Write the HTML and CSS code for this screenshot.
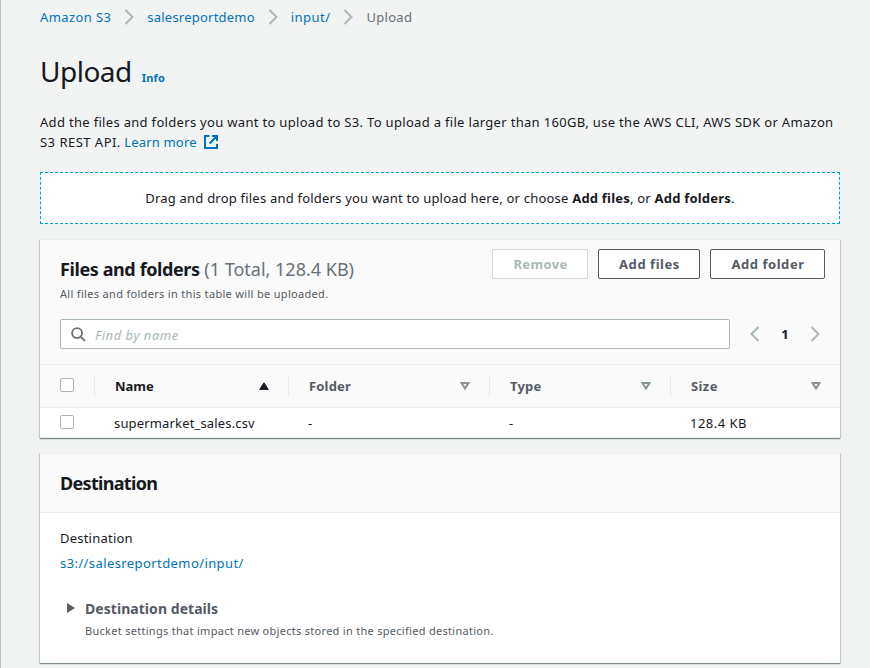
FILE: index.html
```html
<!DOCTYPE html>
<html lang="en">
<head>
<meta charset="utf-8">
<title>Upload</title>
<link rel="stylesheet" href="styles.css">
</head>
<body>
<main class="page">
  <nav class="crumbs">
    <a class="c1">Amazon S3</a>
    <svg class="chev" viewBox="0 0 10 16"><path d="M1.500 1l7 7-7 7"/></svg>
    <a class="c2">salesreportdemo</a>
    <svg class="chev" viewBox="0 0 10 16"><path d="M1.500 1l7 7-7 7"/></svg>
    <a class="c3">input/</a>
    <svg class="chev" viewBox="0 0 10 16"><path d="M1.500 1l7 7-7 7"/></svg>
    <span class="c4">Upload</span>
  </nav>
  <header class="title"><h1>Upload</h1><a class="info">Info</a></header>
  <p class="intro"><span class="l1">Add the files and folders you want to upload to S3. To upload a file larger than 160GB, use the AWS CLI, AWS SDK or Amazon</span><br><span class="l2">S3 REST API.</span> <a class="learn">Learn more</a><svg class="ext" viewBox="0 0 14 14"><path d="M5.500 1H1v12h12V9M8 1h5v5M13 1L5.500 8.500"/></svg></p>
  <div class="drop"><span class="dt">Drag and drop files and folders you want to upload here, or choose <b>Add files</b>, or <b>Add folders</b>.</span></div>

  <section class="card files">
    <div class="head">
      <div class="heading">
        <h2><span class="ff">Files and folders</span> <span class="count">(1 Total, 128.4 KB)</span></h2>
        <p class="desc">All files and folders in this table will be uploaded.</p>
      </div>
      <div class="actions">
        <button class="off b1">Remove</button>
        <button class="b2">Add files</button>
        <button class="b3">Add folder</button>
      </div>
    </div>
    <div class="tools">
      <div class="search">
        <svg viewBox="0 0 16 16"><circle cx="6.500" cy="6.500" r="5.300"/><path d="M10.500 10.500l4.500 4.300"/></svg>
        <span class="ph">Find by name</span>
      </div>
      <div class="pager">
        <svg class="chev" viewBox="0 0 10 16"><path d="M8.500 1l-7 7 7 7"/></svg>
        <b>1</b>
        <svg class="chev" viewBox="0 0 10 16"><path d="M1.500 1l7 7-7 7"/></svg>
      </div>
    </div>
    <div class="row th">
      <div class="cell"><i class="box"></i></div>
      <div class="cell dark"><span>Name</span><svg class="tri" viewBox="0 0 10 8"><path d="M5 .8L9.300 7.400H.7z"/></svg></div>
      <div class="cell"><span class="folder">Folder</span><svg class="tri open" viewBox="0 0 10 8"><path d="M1.500 1h7L5 6.500z"/></svg></div>
      <div class="cell"><span class="folder">Type</span><svg class="tri open" viewBox="0 0 10 8"><path d="M1.500 1h7L5 6.500z"/></svg></div>
      <div class="cell"><span class="size">Size</span><svg class="tri open" viewBox="0 0 10 8"><path d="M1.500 1h7L5 6.500z"/></svg></div>
    </div>
    <div class="row td">
      <div class="cell"><i class="box"></i></div>
      <div class="cell"><span class="csv">supermarket_sales.csv</span></div>
      <div class="cell">-</div>
      <div class="cell">-</div>
      <div class="cell"><span class="kb">128.4 KB</span></div>
    </div>
  </section>

  <section class="card dest">
    <div class="bar"><h2 class="dh">Destination</h2></div>
    <div class="body">
      <div class="label">Destination</div>
      <a class="uri">s3://salesreportdemo/input/</a>
      <div class="expand">
        <svg viewBox="0 0 8 10"><path d="M0 0l8 5-8 5z"/></svg>
        <div><h3>Destination details</h3><p class="bucket">Bucket settings that impact new objects stored in the specified destination.</p></div>
      </div>
    </div>
  </section>
</main>
</body>
</html>
```
FILE: styles.css
```css
* { box-sizing: border-box; }
body { margin: 0; height: 668px; overflow: hidden; background: #f2f3f3; border-left: 1px solid #b9c2c2; font: 13px/20px "Noto Sans", "Open Sans", sans-serif; color: #16191f; }
h1, h2, h3, p { margin: 0; font-weight: normal; white-space: nowrap; }
a { color: #0073bb; }
svg { display: block; flex: none; fill: none; }
.page { width: 800px; margin-left: 39px; }

.crumbs { display: flex; align-items: center; height: 34px; gap: 13px; }
.chev { width: 10px; height: 16px; stroke: #aab7b8; stroke-width: 2; }
.c1 { letter-spacing: .4px; }
.c2 { letter-spacing: .22px; }
.c3 { letter-spacing: .45px; }
.c4 { letter-spacing: .3px; color: #687078; }

.title { display: flex; align-items: baseline; gap: 10px; margin-top: 19px; height: 59px; }
h1 { font-size: 28px; line-height: 36px; letter-spacing: -.5px; }
.info { font-size: 11px; font-weight: 700; letter-spacing: .15px; }
.intro { height: 60px; }
.l1 { letter-spacing: .315px; }
.l2 { letter-spacing: .48px; }
.learn { letter-spacing: .18px; }
.ext { display: inline-block; width: 14px; height: 14px; margin-left: 7px; vertical-align: -2px; stroke: #0073bb; stroke-width: 2; }
.drop { height: 52px; background: #fff; border: 1px dashed #00a1c9; display: flex; align-items: center; justify-content: center; white-space: nowrap; letter-spacing: .212px; }

.card { margin-top: 15px; background: #fff; box-shadow: 0 1px 1px 0 rgba(0,28,36,.3), 1px 1px 1px 0 rgba(0,28,36,.15), -1px 1px 1px 0 rgba(0,28,36,.15); border-top: 1px solid #eaeded; }
.files { height: 199px; }
.head { display: flex; justify-content: space-between; height: 79px; padding: 9px 15px 0 20px; background: #fafafa; }
.heading { padding-top: 9px; }
h2 { font-size: 18px; line-height: 22px; }
.ff, .dh, h3, b { font-weight: 700; }
.ff { letter-spacing: -.4px; }
.count { color: #687078; }
.desc, .bucket { font-size: 11px; line-height: 18px; color: #545b64; }
.desc { margin-top: 5px; letter-spacing: .317px; }
.actions { display: flex; gap: 10px; }
button { height: 30px; padding: 0 0 0 1px; border: 1px solid #545b64; border-radius: 2px; background: #fff; color: #545b64; font: 700 13px/20px "Noto Sans", sans-serif; letter-spacing: .55px; }
.b1 { width: 96px; letter-spacing: .33px; }
.b2 { width: 102px; }
.b3 { width: 115px; }
.off { border-color: #d5dbdb; color: #aab7b8; }

.tools { display: flex; height: 45px; padding-left: 20px; background: #fafafa; }
.search { display: flex; align-items: center; width: 670px; height: 30px; padding-left: 10px; border: 1px solid #aab7b8; border-radius: 2px; background: #fff; }
.search svg { width: 15px; height: 15px; margin-right: 9px; stroke: #687078; stroke-width: 2; }
.ph { padding-top: 2px; font-style: italic; color: #aab7b8; letter-spacing: .52px; }
.pager { display: flex; align-items: center; justify-content: space-between; width: 70px; height: 30px; margin-left: 20px; }

.row { display: grid; grid-template-columns: 54px 194px 201px 181px 170px; align-items: center; }
.th { height: 44px; background: #fafafa; border-top: 1px solid #eaeded; border-bottom: 1px solid #eaeded; color: #545b64; font-weight: 700; }
.td { height: 30px; border-bottom: 1px solid #eaeded; padding-top: 1px; }
.cell { display: flex; align-items: center; padding: 0 19px 0 20px; }
.th .cell { height: 22px; justify-content: space-between; border-left: 1px solid #eaeded; }
.th .cell:first-child { border: 0; }
.dark { color: #16191f; }
.folder { letter-spacing: .18px; }
.size { letter-spacing: .4px; }
.csv { letter-spacing: .16px; }
.kb { letter-spacing: .48px; }
.box { width: 14px; height: 14px; margin-bottom: 2px; border: 1px solid #aab7b8; border-radius: 2px; background: #fff; }
.tri { width: 10px; height: 8px; fill: #16191f; stroke: #16191f; }
.open { fill: none; stroke: #879596; stroke-width: 2; }

.dest { height: 210px; }
.bar { height: 59px; padding: 18px 20px; background: #fafafa; border-bottom: 1px solid #eaeded; }
.dh { letter-spacing: -.68px; }
.body { padding: 15px 20px; }
.label { letter-spacing: .22px; }
.uri { display: block; margin-top: 5px; letter-spacing: .41px; }
.expand { display: flex; margin-top: 26px; padding-left: 7px; }
.expand svg { width: 8px; height: 10px; margin: 4px 10px 0 0; fill: #545b64; }
h3 { font-size: 14px; line-height: 20px; color: #545b64; letter-spacing: .05px; }
.bucket { margin-top: 3px; letter-spacing: .29px; }
```
